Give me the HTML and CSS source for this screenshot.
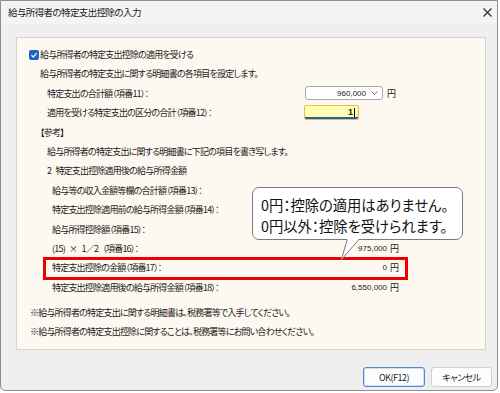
FILE: index.html
```html
<!DOCTYPE html>
<html lang="ja">
<head>
<meta charset="utf-8">
<title>給与所得者の特定支出控除の入力</title>
<link rel="stylesheet" href="styles.css">
</head>
<body>
<div class="window">
  <div class="titlebar">
    <span class="title">給与所得者の特定支出控除の入力</span>
    <svg class="close" width="9" height="9" viewBox="0 0 9 9"><path d="M0.5 0.5 L8.5 8.5 M8.5 0.5 L0.5 8.5" stroke="#2b2b2b" stroke-width="1.1" fill="none"/></svg>
  </div>
  <div class="main">
    <div class="panel">
      <div class="row ind-12 chk-row"><span class="checkbox"><svg width="8" height="8" viewBox="0 0 8 8"><path d="M1.5 4.2 L3.3 6 L6.6 2.2" stroke="#fff" stroke-width="1.2" fill="none"/></svg></span>給与所得者の特定支出控除の適用を受ける</div>
      <div class="row ind-23">給与所得者の特定支出に関する明細書の各項目を設定します。</div>
      <div class="row ind-30 field-row"><span class="label">特定支出の合計額（項番11）：</span><span class="combo"><span class="num">960,000</span><svg class="chev" width="7" height="4" viewBox="0 0 7 4"><path d="M0.5 0.5 L3.5 3.5 L6.5 0.5" stroke="#555" stroke-width="0.9" fill="none"/></svg></span><span class="yen">円</span></div>
      <div class="row ind-30 field-row"><span class="label">適用を受ける特定支出の区分の合計（項番12）：</span><span class="textbox"><span class="num">1</span><span class="caret"></span></span></div>
      <div class="row ind-23">【参考】</div>
      <div class="row ind-30">給与所得者の特定支出に関する明細書に下記の項目を書き写します。</div>
      <div class="row ind-30 spaced">2 特定支出控除適用後の給与所得金額</div>
      <div class="row ind-35">給与等の収入金額等欄の合計額（項番13）：</div>
      <div class="row ind-35">特定支出控除適用前の給与所得金額（項番14）：</div>
      <div class="row ind-35">給与所得控除額（項番15）：</div>
      <div class="row ind-35 value-row"><span class="spaced">(15) × 1／2 （項番16）：</span><span class="amount"><span class="num">975,000</span><span>円</span></span></div>
      <div class="row ind-35 value-row highlight"><span>特定支出控除の金額（項番17）：</span><span class="amount"><span class="num">0</span><span>円</span></span></div>
      <div class="row ind-35 value-row"><span>特定支出控除適用後の給与所得金額（項番18）：</span><span class="amount"><span class="num">6,550,000</span><span>円</span></span></div>
      <div class="notes">
        <div class="row ind-13">※給与所得者の特定支出に関する明細書は、税務署等で入手してください。</div>
        <div class="row ind-13">※給与所得者の特定支出控除に関することは、税務署等にお問い合わせください。</div>
      </div>
      <div class="callout">
        <div class="callout-line">0円：控除の適用はありません。</div>
        <div class="callout-line">0円以外：控除を受けられます。</div>
        <svg class="tail" width="22" height="23" viewBox="0 0 22 23"><polygon points="8,0 2,21 20,0" fill="#fff"/><path d="M8.3 0.6 L2.2 21 L19.8 0.6" stroke="#7a7a7a" stroke-width="1" fill="none"/></svg>
      </div>
    </div>
  </div>
  <div class="footer">
    <button class="btn btn-default">OK(F12)</button>
    <button class="btn">キャンセル</button>
  </div>
</div>
</body>
</html>
```

FILE: styles.css
```css
* { box-sizing: border-box; }
html, body { margin: 0; padding: 0; background: #ffffff; }
body {
  font-family: "Noto Sans CJK JP", "Noto Sans", sans-serif;
  font-size: 9px;
  color: #1a1a1a;
  font-feature-settings: "palt";
  letter-spacing: -0.8px;
}
.window {
  width: 498px;
  height: 391px;
  border: 1px solid #8f8f8f;
  border-radius: 0 0 5px 5px;
  background: #efefef;
  display: flex;
  flex-direction: column;
  overflow: hidden;
}
.titlebar {
  height: 23px;
  flex: none;
  background: #f4f4f4;
  display: flex;
  align-items: center;
  justify-content: space-between;
  padding: 0 5px 1px 7px;
  font-size: 9.5px;
  letter-spacing: -0.6px;
}
.close { display: block; }
.main { padding: 13px 0 0 15px; }
.panel {
  position: relative;
  width: 470px;
  height: 313px;
  border: 1px solid #d3d3d3;
  background: #fdf9f1;
  padding-top: 7px;
}
.row {
  height: 19.4px;
  line-height: 19.4px;
  white-space: nowrap;
}
.spaced { word-spacing: 3px; }
.ind-12 { padding-left: 12px; }
.ind-13 { padding-left: 13px; }
.ind-23 { padding-left: 23px; }
.ind-30 { padding-left: 30px; }
.ind-35 { padding-left: 35px; }
.chk-row { display: flex; align-items: center; }
.checkbox {
  width: 10px;
  height: 10px;
  border-radius: 2px;
  background: #1f63c4;
  margin-right: 1px;
  display: flex;
  align-items: center;
  justify-content: center;
}
.checkbox svg { display: block; }
.field-row { display: flex; align-items: center; }
.label { width: 258px; flex: none; }
.num {
  font-family: "Liberation Sans", Arial, sans-serif;
  font-size: 8px;
  letter-spacing: 0;
}
.combo {
  width: 78px;
  height: 14px;
  border: 1px solid #a8a8a8;
  border-radius: 3px;
  background: #ffffff;
  display: flex;
  align-items: center;
  justify-content: flex-end;
  padding-right: 4px;
}
.chev { margin-left: 5px; display: block; }
.yen { margin-left: 4px; letter-spacing: 0; }
.textbox {
  width: 55px;
  height: 15px;
  margin-left: -1px;
  border: 1px solid #f0bb46;
  border-radius: 2px;
  background: #ffffb4;
  box-shadow: inset 0 -2px 0 #1d5fc0;
  display: flex;
  align-items: center;
  justify-content: flex-end;
  padding: 0 3px 1px 0;
}
.textbox .num { font-size: 9px; font-weight: bold; }
.caret { width: 1px; height: 9px; background: #000; margin-left: 1px; }
.value-row {
  display: flex;
  justify-content: space-between;
  padding-right: 86px;
}
.amount { display: flex; align-items: center; gap: 3px; letter-spacing: 0; }
.highlight { position: relative; }
.highlight::after {
  content: "";
  position: absolute;
  left: 26px;
  right: 77px;
  top: -1px;
  bottom: -2px;
  border: 3px solid #ee0000;
}
.notes { margin-top: 6px; }
.callout {
  position: absolute;
  left: 235px;
  top: 149px;
  width: 211px;
  height: 53px;
  border: 1px solid #7a7a7a;
  border-radius: 7px;
  background: #ffffff;
  font-size: 14.3px;
  line-height: 21px;
  letter-spacing: 0;
  padding: 6px 0 0 8px;
  color: #111;
}
.callout-line { white-space: nowrap; }
.tail {
  position: absolute;
  left: 86px;
  top: 51px;
  display: block;
}
.footer {
  display: flex;
  justify-content: flex-end;
  gap: 6px;
  padding-right: 5px;
  margin-top: 17px;
}
.btn {
  height: 20px;
  width: 61px;
  font-family: "Noto Sans CJK JP", "Noto Sans", sans-serif;
  font-size: 9px;
  letter-spacing: -0.5px;
  font-feature-settings: "palt";
  color: #1e1e1e;
  background: #fdfdfd;
  border: 1px solid #d0d0d0;
  border-radius: 3px;
  padding: 0;
}
.btn-default {
  width: 62px;
  border: 1px solid #4a88d4;
  box-shadow: inset 0 0 0 1px #cfe0f5;
}
```
